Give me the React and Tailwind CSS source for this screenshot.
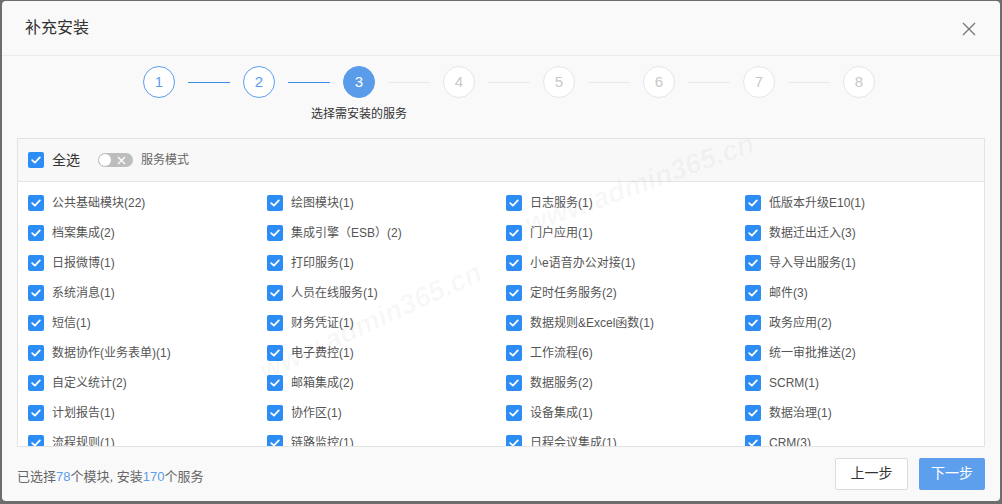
import React from 'react';

const rows = [
  ['公共基础模块(22)', '绘图模块(1)', '日志服务(1)', '低版本升级E10(1)'],
  ['档案集成(2)', '集成引擎（ESB）(2)', '门户应用(1)', '数据迁出迁入(3)'],
  ['日报微博(1)', '打印服务(1)', '小e语音办公对接(1)', '导入导出服务(1)'],
  ['系统消息(1)', '人员在线服务(1)', '定时任务服务(2)', '邮件(3)'],
  ['短信(1)', '财务凭证(1)', '数据规则&Excel函数(1)', '政务应用(2)'],
  ['数据协作(业务表单)(1)', '电子费控(1)', '工作流程(6)', '统一审批推送(2)'],
  ['自定义统计(2)', '邮箱集成(2)', '数据服务(2)', 'SCRM(1)'],
  ['计划报告(1)', '协作区(1)', '设备集成(1)', '数据治理(1)'],
  ['流程规则(1)', '链路监控(1)', '日程会议集成(1)', 'CRM(3)'],
];

const Check = () => (
  <span className="w-4 h-4 shrink-0 rounded-[2px] bg-[#2b8df5] flex items-center justify-center">
    <svg width="10" height="8" viewBox="0 0 10 8" fill="none">
      <path d="M1.2 4.1L3.9 6.6L8.8 1.4" stroke="#fff" strokeWidth="1.8" strokeLinecap="round" strokeLinejoin="round" />
    </svg>
  </span>
);

const Step = ({ n, state, label }) => {
  const cls =
    state === 'active'
      ? 'bg-[#5a9ce9] border-[#5a9ce9] text-white'
      : state === 'done'
      ? 'bg-white border-[#5b9ef0] text-[#5b9ef0]'
      : 'bg-white border-[#e6e6e6] text-[#c8c8c8]';
  return (
    <div className="w-8 flex flex-col items-center">
      <div className={`w-8 h-8 rounded-full border flex items-center justify-center text-[15px] ${cls}`}>{n}</div>
      {label && <div className="mt-[8px] text-[12px] leading-[16px] text-[#333] whitespace-nowrap">{label}</div>}
    </div>
  );
};

const Line = ({ done }) => (
  <div className={`w-[42px] h-px mx-[13px] mt-4 ${done ? 'bg-[#3b8de8]' : 'bg-[#e8e8e8]'}`} />
);

export default function App() {
  const steps = [1, 2, 3, 4, 5, 6, 7, 8];
  return (
    <div
      className="w-[1002px] h-[504px] bg-[#6d6d6d] pt-px pl-[2px] pr-[2px] pb-[3px]"
      style={{ fontFamily: '"Liberation Sans", "Noto Sans CJK SC", sans-serif' }}
    >
      <div className="relative w-full h-full bg-[#f9f9f9] rounded-[4px] overflow-hidden flex flex-col">
        {/* Header */}
        <div className="h-[55px] shrink-0 border-b border-[#ececec] flex items-center justify-between pl-[23px] pr-[24px]">
          <span className="text-[16px] text-[#333] leading-none">补充安装</span>
          <svg width="14" height="14" viewBox="0 0 14 14" className="mt-[1px]">
            <path d="M1 1L13 13M13 1L1 13" stroke="#777" strokeWidth="1.3" />
          </svg>
        </div>

        {/* Steps */}
        <div className="h-[82px] shrink-0 pt-[10px] pl-[141px] flex items-start">
          {steps.map((n, i) => (
            <React.Fragment key={n}>
              {i > 0 && <Line done={i < 3} />}
              <Step
                n={n}
                state={n < 3 ? 'done' : n === 3 ? 'active' : 'todo'}
                label={n === 3 ? '选择需安装的服务' : null}
              />
            </React.Fragment>
          ))}
        </div>

        {/* Panel */}
        <div className="mx-[15px] h-[309px] shrink-0 border border-[#e3e3e3] flex flex-col bg-white">
          <div className="h-[43px] shrink-0 bg-[#f8f8f8] border-b border-[#e5e5e5] flex items-center pl-[10px]">
            <Check />
            <span className="ml-[8px] text-[14px] text-[#333]">全选</span>
            <span className="ml-[18px] relative w-[35px] h-[14px] rounded-full bg-[#bdbdbd] flex items-center">
              <span className="absolute left-[1px] w-[12px] h-[12px] rounded-full bg-white" />
              <svg width="9" height="9" viewBox="0 0 9 9" className="absolute left-[19px]">
                <path d="M1 1L8 8M8 1L1 8" stroke="#fff" strokeWidth="1.3" />
              </svg>
            </span>
            <span className="ml-[8px] text-[12px] text-[#666]">服务模式</span>
          </div>
          <div className="flex-1 overflow-hidden pl-[10px] pt-[6px]">
            <div className="grid grid-cols-[239px_239px_239px_239px]">
              {rows.flat().map((t, i) => (
                <div key={i} className="h-[30px] flex items-center">
                  <Check />
                  <span className="ml-[8px] text-[12px] text-[#555] whitespace-nowrap">{t}</span>
                </div>
              ))}
            </div>
          </div>
        </div>

        {/* Footer */}
        <div className="flex-1 flex items-center justify-between pl-[15px] pr-[15px] pb-[1px]">
          <span className="mt-[6px] text-[13px] text-[#666]">
            已选择<span className="text-[#5b9de9]">78</span>个模块, 安装<span className="text-[#5b9de9]">170</span>个服务
          </span>
          <div className="flex gap-[11px]">
            <button className="w-[73px] h-[32px] bg-white border border-[#dcdcdc] rounded-[2px] text-[14px] text-[#333]">上一步</button>
            <button className="w-[66px] h-[32px] bg-[#5e9fed] rounded-[2px] text-[14px] text-white">下一步</button>
          </div>
        </div>

        {/* Watermark */}
        <span className="absolute left-[515px] top-[162px] w-[245px] text-center -rotate-[20deg] text-[28px] font-bold italic text-black/[0.035] whitespace-nowrap pointer-events-none">
          www.admin365.cn
        </span>
        <span className="absolute left-[246px] top-[300px] w-[245px] text-center -rotate-[25deg] text-[28px] font-bold italic text-black/[0.035] whitespace-nowrap pointer-events-none">
          www.admin365.cn
        </span>
      </div>
    </div>
  );
}
